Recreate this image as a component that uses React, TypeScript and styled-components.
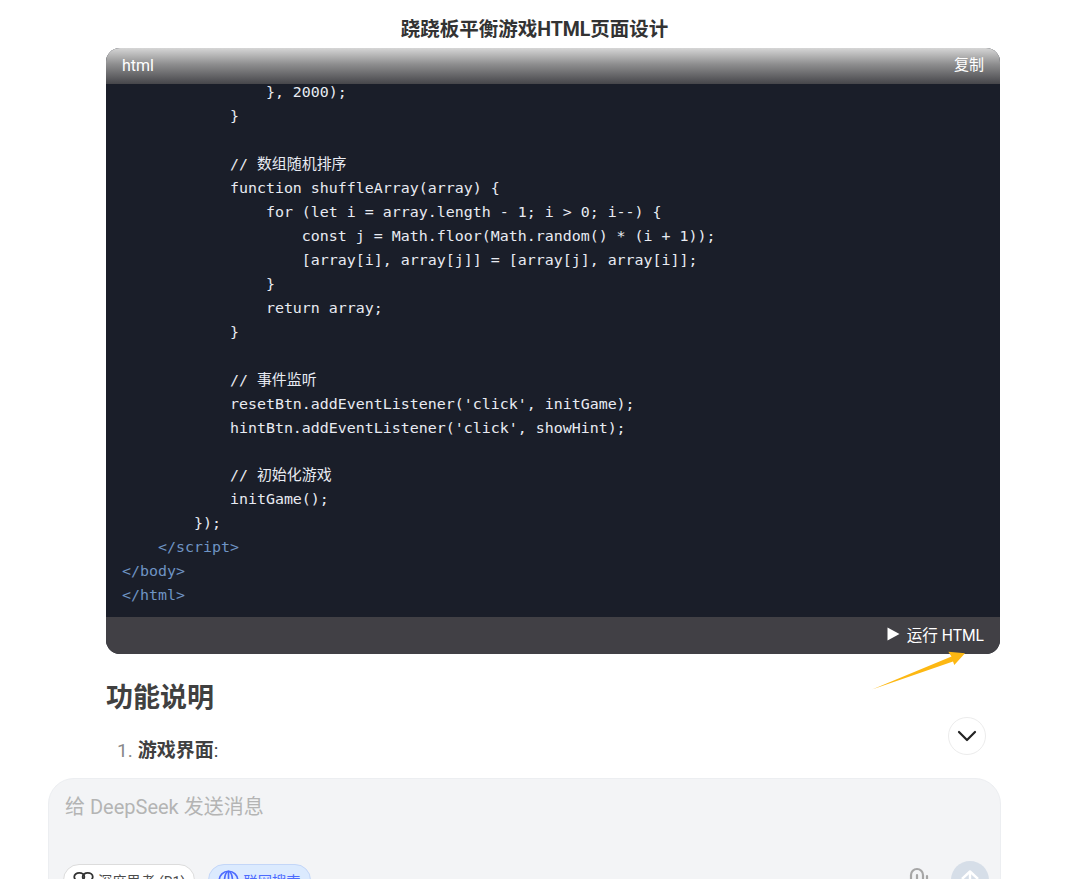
import styled, { createGlobalStyle } from "styled-components";

const GlobalStyle = createGlobalStyle`
  html, body {
    margin: 0;
    padding: 0;
    background: #fff;
    overflow: hidden;
  }
`

const SANS = `Roboto, "Noto Sans CJK SC", sans-serif`
const MONO = `"DejaVu Sans Mono", "Noto Sans CJK SC", monospace`

const codeLines = [
  { text: "                }, 2000);" },
  { text: "            }" },
  { text: "" },
  { text: "            // 数组随机排序" },
  { text: "            function shuffleArray(array) {" },
  { text: "                for (let i = array.length - 1; i > 0; i--) {" },
  { text: "                    const j = Math.floor(Math.random() * (i + 1));" },
  { text: "                    [array[i], array[j]] = [array[j], array[i]];" },
  { text: "                }" },
  { text: "                return array;" },
  { text: "            }" },
  { text: "" },
  { text: "            // 事件监听" },
  { text: "            resetBtn.addEventListener('click', initGame);" },
  { text: "            hintBtn.addEventListener('click', showHint);" },
  { text: "" },
  { text: "            // 初始化游戏" },
  { text: "            initGame();" },
  { text: "        });" },
  { text: "    </script>", tag: true },
  { text: "</body>", tag: true },
  { text: "</html>", tag: true },
]

const App = () => {
  return (
    <Page>
      <GlobalStyle />
      <Title>跷跷板平衡游戏HTML页面设计</Title>
      <Main>
        <CodeBlock>
          <CodeHeader>
            <LangLabel>html</LangLabel>
            <CopyText>复制</CopyText>
          </CodeHeader>
          <CodeBody>
            {codeLines.map((line, i) => (
              <CodeLine key={i} $tag={line.tag}>{line.text || " "}</CodeLine>
            ))}
          </CodeBody>
          <CodeFooter>
            <RunButton>
              <svg width="13" height="14" viewBox="0 0 13 14">
                <path d="M0.5 0.5 L12.5 7 L0.5 13.5 Z" fill="#fff" />
              </svg>
              运行 HTML
            </RunButton>
          </CodeFooter>
        </CodeBlock>
        <Heading>功能说明</Heading>
        <ListItem>
          <ItemNumber>1.</ItemNumber>
          <strong>游戏界面</strong>:
        </ListItem>
        <Arrow width="100" height="42" viewBox="0 0 100 42">
          <path d="M0 39.5 L79.5 6.5 L76.3 1.7 L93 3.3 L82.3 15 L81 11.5 Z" fill="#fdb813" />
        </Arrow>
        <ScrollDown>
          <svg width="20" height="12" viewBox="0 0 20 12" fill="none">
            <path d="M2 2 L10 10 L18 2" stroke="#222" strokeWidth="2.2" strokeLinecap="round" strokeLinejoin="round" />
          </svg>
        </ScrollDown>
      </Main>
      <Composer>
        <Placeholder>给 DeepSeek 发送消息</Placeholder>
        <ComposerBar>
          <Chip>
            <svg width="21" height="21" viewBox="0 0 20 20" fill="none" stroke="#333" strokeWidth="1.7">
              <ellipse cx="6" cy="6.5" rx="4.8" ry="3.8" />
              <ellipse cx="14" cy="6.5" rx="4.8" ry="3.8" />
              <path d="M4 10 L14 17 M16 10 L6 17" />
            </svg>
            深度思考 (R1)
          </Chip>
          <Chip $active>
            <svg width="21" height="21" viewBox="0 0 20 20" fill="none" stroke="#4d6bfe" strokeWidth="1.6">
              <circle cx="10" cy="10" r="8.8" />
              <ellipse cx="10" cy="10" rx="3.8" ry="8.8" />
              <path d="M10 1.5 V18.5 M1.5 10 H18.5" />
            </svg>
            联网搜索
          </Chip>
          <Spacer />
          <AttachIcon width="22" height="26" viewBox="0 0 22 26" fill="none" stroke="#a6a6a6" strokeWidth="2.2" strokeLinecap="round">
            <path d="M3 20 V8 a6 6 0 0 1 12 0 V18 a3 3 0 0 1 -6 0 V8" />
            <path d="M19 9 V20" />
          </AttachIcon>
          <SendButton>
            <svg width="20" height="20" viewBox="0 0 20 20" fill="none" stroke="#fff" strokeWidth="2.4" strokeLinejoin="round">
              <path d="M2 9 L10 1.5 L18 9" />
              <path d="M10 2 V19" />
            </svg>
          </SendButton>
        </ComposerBar>
      </Composer>
    </Page>
  )
}

export default App;

const Page = styled.div`
  display: flex;
  flex-direction: column;
  height: 879px;
  overflow: hidden;
  font-family: ${SANS};
  color: #333;
`

const Title = styled.div`
  height: 48px;
  line-height: 60px;
  padding-right: 10px;
  text-align: center;
  font-size: 19.5px;
  font-weight: 700;
  color: #333;
  flex: none;
`

const Main = styled.div`
  position: relative;
  height: 730px;
  padding: 0 79px 0 106px;
  flex: none;
`

const CodeBlock = styled.div`
  display: flex;
  flex-direction: column;
  height: 606px;
  border-radius: 14px;
  overflow: hidden;
  background: #1a1e29;
`

const CodeHeader = styled.div`
  display: flex;
  align-items: center;
  justify-content: space-between;
  height: 36px;
  padding: 0 16px 2px 16px;
  box-sizing: border-box;
  background: linear-gradient(180deg, #d6d6d6 0%, #8e8e8f 45%, #46464a 100%);
  color: #fff;
  flex: none;
  position: relative;
  z-index: 1;
`

const LangLabel = styled.span`
  font-size: 16px;
`

const CopyText = styled.span`
  font-size: 15px;
  line-height: 18px;
  margin-bottom: 1px;
`

const CodeBody = styled.div`
  display: flex;
  flex-direction: column;
  justify-content: flex-end;
  flex: 1;
  min-height: 0;
  padding: 0 16px 9px;
  overflow: hidden;
  font-family: ${MONO};
  font-size: 14.95px;
`

const CodeLine = styled.div<{ $tag?: boolean }>`
  flex: none;
  height: 23.95px;
  line-height: 23.95px;
  white-space: pre;
  color: ${(p) => (p.$tag ? "#6f94c4" : "#e8ebf2")};
`

const CodeFooter = styled.div`
  display: flex;
  align-items: center;
  justify-content: flex-end;
  height: 37px;
  padding: 0 16px 3px;
  box-sizing: border-box;
  background: #414045;
  flex: none;
`

const RunButton = styled.div`
  display: flex;
  align-items: center;
  gap: 7px;
  color: #fff;
  font-size: 15.6px;
`

const Heading = styled.h2`
  margin: 26px 0 0;
  font-size: 27px;
  line-height: 36px;
  font-weight: 700;
  color: #404040;
`

const ListItem = styled.div`
  display: flex;
  align-items: center;
  margin: 22px 0 0 11px;
  font-size: 19px;
  line-height: 26px;
  color: #404040;
`

const ItemNumber = styled.span`
  color: #888;
  margin-right: 5px;
`

const Arrow = styled.svg`
  position: absolute;
  left: 872px;
  top: 602px;
`

const ScrollDown = styled.div`
  position: absolute;
  left: 948px;
  top: 669px;
  display: flex;
  align-items: center;
  justify-content: center;
  width: 38px;
  height: 38px;
  box-sizing: border-box;
  border: 1px solid #ececec;
  border-radius: 50%;
  background: #fff;
`

const Composer = styled.div`
  flex: none;
  box-sizing: border-box;
  width: 953px;
  height: 140px;
  margin-left: 48px;
  padding: 16px 11px 0 14px;
  background: #f3f4f6;
  border: 1px solid #eceef1;
  border-radius: 26px;
`

const Placeholder = styled.div`
  font-size: 20px;
  line-height: 24px;
  color: #b4b4b4;
  margin-left: 2px;
`

const ComposerBar = styled.div`
  display: flex;
  align-items: center;
  gap: 13px;
  margin-top: 42px;
`

const Chip = styled.div<{ $active?: boolean }>`
  display: flex;
  align-items: center;
  gap: 4px;
  height: 32px;
  box-sizing: border-box;
  padding: 0 9px;
  border-radius: 16px;
  font-size: 14.3px;
  border: 1px solid ${(p) => (p.$active ? "#c3d6f8" : "#dcdcdc")};
  background: ${(p) => (p.$active ? "#dbeafe" : "#fff")};
  color: ${(p) => (p.$active ? "#4d6bfe" : "#4c4c4c")};
`

const Spacer = styled.div`
  flex: 1;
`

const AttachIcon = styled.svg`
  margin-right: 8px;
`

const SendButton = styled.div`
  display: flex;
  align-items: center;
  justify-content: center;
  width: 38px;
  height: 38px;
  border-radius: 50%;
  background: #d6dee8;
`
